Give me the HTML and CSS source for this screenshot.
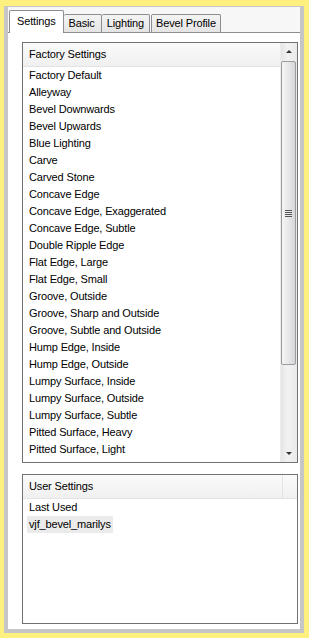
FILE: index.html
```html
<!DOCTYPE html>
<html lang="en">
<head>
  <meta charset="UTF-8" />
  <title>Bevel Presets</title>
  <link rel="stylesheet" href="styles.css">
</head>
<body>
  <div class="window">
    <div class="tabs">
      <div class="tab active">Settings</div>
      <div class="tab basic">Basic</div>
      <div class="tab lighting">Lighting</div>
      <div class="tab profile">Bevel Profile</div>
    </div>

    <div class="panel">
      <div class="box factory">
        <div class="list">
          <div class="list-head">Factory Settings</div>
          <div class="item">Factory Default</div>
          <div class="item">Alleyway</div>
          <div class="item">Bevel Downwards</div>
          <div class="item">Bevel Upwards</div>
          <div class="item">Blue Lighting</div>
          <div class="item">Carve</div>
          <div class="item">Carved Stone</div>
          <div class="item">Concave Edge</div>
          <div class="item">Concave Edge, Exaggerated</div>
          <div class="item">Concave Edge, Subtle</div>
          <div class="item">Double Ripple Edge</div>
          <div class="item">Flat Edge, Large</div>
          <div class="item">Flat Edge, Small</div>
          <div class="item">Groove, Outside</div>
          <div class="item">Groove, Sharp and Outside</div>
          <div class="item">Groove, Subtle and Outside</div>
          <div class="item">Hump Edge, Inside</div>
          <div class="item">Hump Edge, Outside</div>
          <div class="item">Lumpy Surface, Inside</div>
          <div class="item">Lumpy Surface, Outside</div>
          <div class="item">Lumpy Surface, Subtle</div>
          <div class="item">Pitted Surface, Heavy</div>
          <div class="item">Pitted Surface, Light</div>
          <div class="item">Pillow</div>
        </div>
        <div class="scrollbar">
          <div class="arrow up"></div>
          <div class="thumb"><span class="grip"></span></div>
          <div class="track"></div>
          <div class="arrow down"></div>
        </div>
      </div>

      <div class="box user">
        <div class="list">
          <div class="list-head split"><span>User Settings</span><span class="col"></span></div>
          <div class="item">Last Used</div>
          <div class="item"><span class="selected">vjf_bevel_marilys</span></div>
        </div>
      </div>
    </div>
  </div>
</body>
</html>
```

FILE: styles.css
```css
body {
  margin: 0;
  padding: 6px 5px 5px 4px;
  background-color: #fdf07f;
  font-family: "Liberation Sans", Arial, sans-serif;
  font-size: 11px;
  letter-spacing: -0.15px;
  color: #000;
}
.window {
  height: 622px;
  display: flex;
  flex-direction: column;
  border: 4px solid #c6c6c6;
  border-top: 1px solid #c6c6c6;
  background-color: #f7f7f7;
}
.tabs {
  display: flex;
  align-items: flex-end;
  height: 25px;
  padding-left: 1px;
}
.tab {
  height: 17px;
  line-height: 17px;
  padding: 0 5px;
  border: 1px solid #8c8e94;
  border-bottom: none;
  border-left: none;
  background: linear-gradient(#f4f4f4, #e4e4e4);
  border-radius: 2px 2px 0 0;
}
.tab.active {
  height: 22px;
  line-height: 20px;
  padding: 0 7px;
  margin-bottom: -1px;
  border-left: 1px solid #8c8e94;
  background: #fff;
  position: relative;
  z-index: 1;
}
.tab.basic {
  padding: 0 6px 0 5px;
}
.tab.lighting {
  padding: 0 5px;
}
.tab.profile {
  margin-left: 1px;
  padding: 0 4px 0 4px;
  border-left: 1px solid #8c8e94;
}
.panel {
  flex: 1;
  display: flex;
  flex-direction: column;
  gap: 11px;
  padding: 9px 2px 5px 14px;
  background: #fff;
  border-top: 1px solid #8c8e94;
}
.box {
  display: flex;
  border: 1px solid #727272;
  background: #fff;
  overflow: hidden;
}
.factory {
  height: 419px;
}
.user {
  flex: 1;
}
.list {
  flex: 1;
  overflow: hidden;
}
.list-head {
  display: flex;
  height: 23px;
  line-height: 23px;
  padding-left: 6px;
  background: linear-gradient(#fafafa, #f0f0f0);
  border-bottom: 1px solid #e3e3e3;
}
.list-head.split span:first-child {
  flex: 1;
}
.list-head .col {
  width: 14px;
  border-left: 1px solid #e3e3e3;
}
.item {
  height: 17px;
  line-height: 17px;
  padding-left: 6px;
  white-space: nowrap;
}
.selected {
  margin-left: -2px;
  padding: 0 2px;
  display: inline-block;
  background: #ebebeb;
}
.scrollbar {
  width: 16px;
  display: flex;
  flex-direction: column;
  background: linear-gradient(to right, #e6e6e6, #f2f2f2 40%, #eaeaea);
  border-left: 1px solid #ececec;
}
.arrow {
  height: 17px;
  display: flex;
  align-items: center;
  justify-content: center;
}
.arrow::before {
  content: "";
  border-left: 3px solid transparent;
  border-right: 3px solid transparent;
}
.arrow.up::before {
  border-bottom: 3px solid #333;
}
.arrow.down::before {
  border-top: 3px solid #333;
}
.thumb {
  height: 302px;
  margin: 1px 1px 0 0;
  border: 1px solid #9b9b9b;
  border-radius: 2px;
  background: linear-gradient(to right, #f4f4f4, #e9e9eb 45%, #d6d6da);
  display: flex;
  align-items: center;
  justify-content: center;
}
.grip {
  width: 7px;
  height: 7px;
  background: repeating-linear-gradient(#555 0 1px, transparent 1px 2px);
}
.track {
  flex: 1;
}
```
